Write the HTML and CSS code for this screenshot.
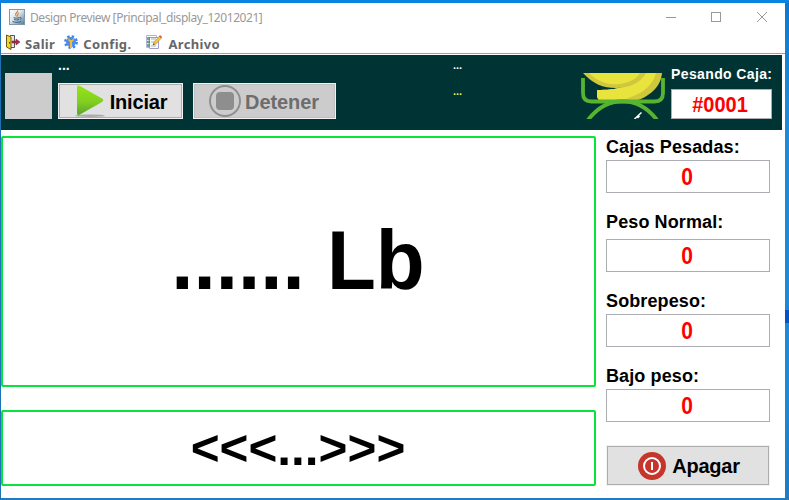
FILE: index.html
```html
<!DOCTYPE html>
<html lang="es">
<head>
<meta charset="utf-8">
<title>Design Preview</title>
<link rel="stylesheet" href="styles.css">
</head>
<body>
<div class="window">
  <header class="titlebar">
    <svg class="java" width="16" height="16" viewBox="0 0 16 16">
      <defs><linearGradient id="jb" x1="0" y1="0" x2="1" y2="1"><stop offset="0" stop-color="#fff"/><stop offset=".45" stop-color="#dce6ec"/><stop offset="1" stop-color="#4d7590"/></linearGradient></defs>
      <rect x=".5" y=".5" width="15" height="15" fill="url(#jb)" stroke="#7d98a8"/>
      <path d="M8.500 1.500c1 2-3 2.500-1.800 4.500L7.500 7.500M10 4C7.500 5.200 9.500 6 8.200 7.500" fill="none" stroke="#e07a30" stroke-width="1.100"/>
      <path d="M4.500 8.700c2 .7 4 .5 6 0M5 10.500c2 .6 3.500.6 5 0M10.800 8.500c2-.4 1.700 1.500 0 2M3.500 12.500c2.500 1.200 6.500 1 8.500 0" fill="none" stroke="#315f82" stroke-width="1"/>
    </svg>
    <span class="title">Design Preview [Principal_display_12012021]</span>
    <svg class="controls" width="104" height="12" viewBox="0 0 104 12" fill="none" stroke="#999" shape-rendering="crispEdges">
      <path d="M1 6.500h10"/><rect x="46.500" y="1.500" width="9" height="9"/><path d="M92 1l10 10M102 1L92 11" shape-rendering="auto"/>
    </svg>
  </header>
  <nav class="menubar">
    <span class="menu salir">
      <svg width="15" height="16" viewBox="0 0 15 16"><path d="M4 1.500h4.500v12H4" fill="#e8e8e8" stroke="#555"/><path d="M.5 1L5 3v12.500L.5 13z" fill="#f2d630" stroke="#665a14"/><path d="M3.500 8v1.500" stroke="#333"/><path d="M6 7h4V5L14 8l-4 3V9H6z" fill="#a92a48" stroke="#7c1931" stroke-width=".5"/></svg>
      <span>Salir</span></span>
    <span class="menu config">
      <svg width="14" height="14" viewBox="0 0 14 14"><circle cx="7" cy="7" r="5.600" fill="none" stroke="#3e83ea" stroke-width="2.600" stroke-dasharray="2.350 2.048"/><circle cx="7" cy="7" r="5" fill="#4a8cf0"/><path d="M4.300 3v2.500L6 7v6h2V7l1.700-1.500V3L8 5H6z" fill="#f4bb35"/></svg>
      <span>Config.</span></span>
    <span class="menu archivo">
      <svg width="18" height="16" viewBox="0 0 18 16"><path d="M1.500 1.500h10v12h-10z" fill="#fff" stroke="#b4b4d4"/><path d="M4.500 3.500h9v11h-9z" fill="#f8f8ff" stroke="#9d9dcc"/><path d="M2.500 3.500h2v2h-2zM2.500 7h2v2h-2zM2.500 10.500h2v2h-2z" fill="#7ab990" stroke="#46856a" stroke-width=".7"/><path d="M6 5h5M6 8h4M6 12h5" stroke="#a6bbb3"/><path d="M8 11l1-3 5.500-6 2 2L11 10z" fill="#f4c63d" stroke="#b88b32" stroke-width=".6"/><path d="M14 2.500L15 1l2.200 2-1 1.300z" fill="#df5a50"/><path d="M8 11l.7-1.700 1 .9z" fill="#333"/></svg>
      <span>Archivo</span></span>
  </nav>
  <section class="toolbar">
    <div class="thumb"></div>
    <div class="actions">
      <div class="status">...</div>
      <div class="buttons">
        <button class="btn start">
          <svg width="32" height="34" viewBox="0 0 32 34"><defs><linearGradient id="pg" x1="0" y1="0" x2="0" y2="1"><stop offset="0" stop-color="#95e516"/><stop offset=".55" stop-color="#83cf20"/><stop offset="1" stop-color="#5ba52b"/></linearGradient></defs><ellipse cx="16" cy="31.700" rx="15" ry="1.200" fill="#aaa"/><path d="M3 3.500Q3 .5 6 2L28 14.500Q30.500 16.200 28 18L6 30.500Q3 32 3 29z" fill="url(#pg)"/></svg>
          <span>Iniciar</span></button>
        <button class="btn stop" disabled>
          <svg width="32" height="32" viewBox="0 0 32 32"><circle cx="16" cy="16" r="15" fill="none" stroke="#8e8e8e" stroke-width="2"/><rect x="7" y="7" width="18" height="18" rx="4" fill="#8e8e8e"/></svg>
          <span>Detener</span></button>
      </div>
    </div>
    <div class="readings"><span>...</span><span class="yellow">...</span></div>
    <svg class="logo" width="84" height="46" viewBox="0 0 84 46">
      <path d="M16 17C34 17 54 14 64 0h17C80 14 68 24 54 28H18L16 24z" fill="#cfc83c"/>
      <path d="M16 17C34 17 54 14 64 0h11C72 12 62 20 50 24 46 26 42 27 40 28H19L16 24z" fill="#e8e43d"/>
      <path d="M2 0C12 11 22 15 35 15 49 15 60 9 65 0z" fill="#cfc83c"/>
      <path d="M8 0C17 9 28 12.500 39 11 50 9 56 5 59 0z" fill="#e8e43d"/>
      <path d="M2 5v15q0 8.500 8.500 8.500h63q8.500 0 8.500-8.500V5" fill="none" stroke="#57b431" stroke-width="3.800"/>
      <path d="M7 47C26 22 57 22 76 47" fill="none" stroke="#57b431" stroke-width="3.800"/>
      <path d="M53.500 46l7-6.500M56.500 45l2-2" fill="none" stroke="#fff" stroke-width="1.500"/>
    </svg>
    <div class="current"><div class="caption">Pesando Caja:</div><div class="code"><span>#0001</span></div></div>
  </section>
  <main class="content">
    <div class="displays">
      <div class="display weight"><span>...... Lb</span></div>
      <div class="display message"><span>&lt;&lt;&lt;...&gt;&gt;&gt;</span></div>
    </div>
    <aside class="counters">
      <div class="counter"><label>Cajas Pesadas:</label><div class="field"><span>0</span></div></div>
      <div class="counter normal"><label>Peso Normal:</label><div class="field"><span>0</span></div></div>
      <div class="counter"><label>Sobrepeso:</label><div class="field"><span>0</span></div></div>
      <div class="counter"><label>Bajo peso:</label><div class="field"><span>0</span></div></div>
      <button class="btn off"><svg width="28" height="28" viewBox="0 0 28 28"><circle cx="14" cy="14" r="14" fill="#c6352b"/><circle cx="14" cy="14" r="8" fill="none" stroke="#fff" stroke-width="2"/><path d="M14 10v8" stroke="#fff" stroke-width="2"/></svg><span>Apagar</span></button>
    </aside>
  </main>
</div>
</body>
</html>
```
FILE: styles.css
```css
* { box-sizing: border-box; }
body {
  margin: 0; width: 789px; height: 500px; overflow: hidden;
  padding: 3px 4px 2px 1px;
  background: linear-gradient(#0a84e0, #0a84e0) 0 0 / 100% 3px no-repeat,
    linear-gradient(#0852c8, #0852c8) 100% 310px / 4px 13px no-repeat,
    linear-gradient(#1b72b4, #1b72b4) 0 0 / 1px 100% no-repeat,
    linear-gradient(#0878d4 0, #1c8ad6 20%, #1c8ad6 80%, #1f7bc4 100%);
  font-family: "Liberation Sans", Arial, sans-serif;
}
.window { width: 784px; height: 495px; background: #fff; display: flex; flex-direction: column; }
.titlebar { height: 30px; display: flex; align-items: center; padding: 0 16px 2px 8px; flex: none; }
.title { font: 12px "Noto Sans", sans-serif; color: #999; margin-left: 5px; white-space: nowrap; letter-spacing: -.43px; }
.controls { margin-left: auto; }
.menubar { height: 21px; flex: none; display: flex; border-bottom: 1px solid #a0a0a0; padding-left: 5px; font: bold 13px "Noto Sans", sans-serif; letter-spacing: .35px; color: #666; }
.menu { display: flex; align-items: center; height: 18px; white-space: nowrap; gap: 4px; }
.menu > span { line-height: 16px; padding-top: 3px; }
.config { margin-left: 9px; gap: 5px; }
.archivo { margin-left: 14px; gap: 5px; }
.toolbar { margin-top: 1px; height: 75px; width: 781px; flex: none; background: #003333; display: flex; color: #fff; }
.thumb { width: 47px; height: 46px; margin: 18px 0 0 4px; background: #ccc; }
.actions { margin-left: 6px; padding-top: 4px; font-weight: bold; width: 278px; }
.status { font-size: 14px; line-height: 12px; height: 24px; }
.buttons { display: flex; gap: 10px; }
.btn { font: bold 20px "Liberation Sans", Arial, sans-serif; border: 1px solid #f2f2f2; outline: 1px solid #adadad; outline-offset: -2px; background: #e1e1e1; color: #000; display: flex; align-items: center; justify-content: center; padding: 0; }
.btn span { transform: scaleY(1.04); padding-top: 2px; }
.start { width: 125px; height: 36px; gap: 4px; padding-right: 0; letter-spacing: -.2px; }
.stop { width: 143px; height: 36px; gap: 4px; background: #ccc; color: #6d6d6d; outline-color: #bfbfbf; padding-right: 1px; letter-spacing: -.1px; }
.readings { margin-left: 117px; width: 128px; padding-top: 3px; display: flex; flex-direction: column; gap: 12px; font: bold 11px/14px "Liberation Sans", Arial, sans-serif; }
.yellow { color: #e9f24a; }
.logo { margin-top: 18px; flex: none; }
.current { margin-left: 6px; width: 101px; padding-top: 11px; font-weight: bold; }
.caption { font-size: 14px; line-height: 16px; height: 23px; white-space: nowrap; letter-spacing: .38px; }
.code { height: 30px; border: 1px solid #abadb3; background: #fff; color: #f00; font-size: 20px; line-height: 28px; text-align: center; padding-right: 3px; }
.code span, .field span { display: inline-block; transform: scaleY(1.1); }
.content { display: flex; flex: 1; padding-top: 6px; }
.displays { width: 595px; display: flex; flex-direction: column; gap: 23px; font-weight: bold; color: #000; }
.display { border: 2px solid #0be33b; border-radius: 2px; display: flex; justify-content: center; align-items: center; white-space: pre; }
.weight { height: 251px; font-size: 80px; line-height: 92px; padding-right: 1px; }
.weight span { transform: scaleY(1.04); margin-top: -2px; }
.message { height: 76px; font-size: 49.5px; line-height: 56px; padding-right: 1px; }
.counters { width: 164px; margin-left: 10px; font-weight: bold; }
.counter { margin-bottom: 18px; }
.counter label { display: block; font-size: 18px; line-height: 20px; height: 24px; padding-top: 1px; white-space: nowrap; letter-spacing: .12px; }
.counter.normal label { height: 28px; }
.field { height: 33px; border: 1px solid #abadb3; color: #f00; font-size: 21px; line-height: 31px; text-align: center; padding-right: 2px; }
.off { width: 164px; height: 41px; gap: 6px; margin-top: 23px; letter-spacing: -.2px; }
.off svg { margin-left: 2px; }
```
